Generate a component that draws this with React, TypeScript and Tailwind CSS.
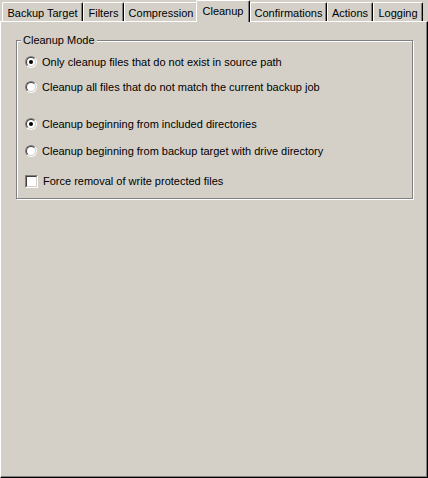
const tabs = [
  { label: 'Backup Target', w: 'w-[81px]' },
  { label: 'Filters', w: 'w-[41px]' },
  { label: 'Compression', w: 'w-[74px]' },
  { label: 'Cleanup', w: 'w-[54px]', active: true },
  { label: 'Confirmations', w: 'w-[77px]' },
  { label: 'Actions', w: 'w-[46px]' },
  { label: 'Logging', w: 'w-[50px]' },
];

function Radio({ checked }: { checked?: boolean }) {
  return (
    <span className="flex h-[12px] w-[12px] shrink-0 rounded-full border border-t-[#808080] border-l-[#808080] border-b-white border-r-white">
      <span className="flex h-[10px] w-[10px] items-center justify-center rounded-full border border-t-[#404040] border-l-[#404040] border-b-[#d4d0c8] border-r-[#d4d0c8] bg-white">
        {checked && <span className="h-[4px] w-[4px] rounded-full bg-black" />}
      </span>
    </span>
  );
}

function Checkbox() {
  return (
    <span className="flex h-[13px] w-[13px] shrink-0 border border-t-[#808080] border-l-[#808080] border-b-white border-r-white">
      <span className="h-[11px] w-[11px] border border-t-[#404040] border-l-[#404040] border-b-[#d4d0c8] border-r-[#d4d0c8] bg-white" />
    </span>
  );
}

function Row({ children, label, className = '' }: { children: React.ReactNode; label: string; className?: string }) {
  return (
    <div className={`flex h-[16px] items-center gap-[5px] pl-[8px] ${className}`}>
      {children}
      <span className="leading-[13px]">{label}</span>
    </div>
  );
}

export default function App() {
  return (
    <div className="h-[478px] w-[428px] bg-[#d4d0c8] font-['Liberation_Sans',Arial,sans-serif] text-[11px] text-black">
      {/* tab strip */}
      <div className="relative z-10 flex h-[21px] items-start pl-[2px]">
        {tabs.map((t) =>
          t.active ? (
            <div
              key={t.label}
              className={`${t.w} -ml-[2px] flex h-[22px] justify-center rounded-t-[2px] border-t border-l border-r border-t-white border-l-white border-r-black bg-[#d4d0c8] pt-[2px] shadow-[inset_-1px_0_0_#808080]`}
            >
              {t.label}
            </div>
          ) : (
            <div
              key={t.label}
              className={`${t.w} mt-[2px] flex h-[19px] justify-center rounded-t-[2px] border-t border-l border-r border-t-white border-l-white border-r-black pt-[2px] shadow-[inset_-1px_0_0_#808080]`}
            >
              {t.label}
            </div>
          ),
        )}
      </div>

      {/* panel */}
      <div className="h-[457px] border border-t-white border-l-white border-r-black border-b-black pt-[18px] pl-[15px] shadow-[inset_-1px_-1px_0_#808080]">
        <div className="relative h-[159px] w-[397px] border border-[#808080] pt-[13px] shadow-[1px_1px_0_#fff,inset_1px_1px_0_#fff]">
          <span className="absolute -top-[7px] left-[4px] bg-[#d4d0c8] px-[2px] leading-[13px]">Cleanup Mode</span>
          <Row label="Only cleanup files that do not exist in source path">
            <Radio checked />
          </Row>
          <Row label="Cleanup all files that do not match the current backup job" className="mt-[9px]">
            <Radio />
          </Row>
          <Row label="Cleanup beginning from included directories" className="mt-[21px]">
            <Radio checked />
          </Row>
          <Row label="Cleanup beginning from backup target with drive directory" className="mt-[11px]">
            <Radio />
          </Row>
          <Row label="Force removal of write protected files" className="mt-[14px] gap-[4px]">
            <Checkbox />
          </Row>
        </div>
      </div>
    </div>
  );
}
